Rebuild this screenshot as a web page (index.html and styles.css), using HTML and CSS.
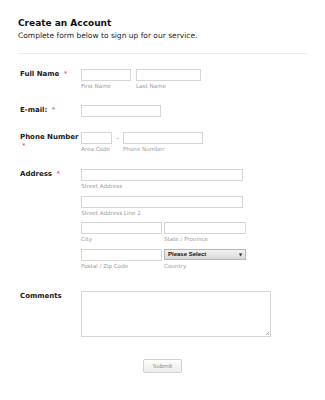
FILE: index.html
```html
<!DOCTYPE html>
<html>
<head>
<meta charset="utf-8">
<link rel="stylesheet" href="styles.css">
</head>
<body>
<div class="page">
  <div class="header">
    <h1 class="title">Create an Account</h1>
    <p class="subtitle">Complete form below to sign up for our service.</p>
  </div>
  <form class="form">
    <div class="row">
      <label class="label">Full Name <span class="req">*</span></label>
      <div class="fields">
        <div class="field"><input class="input w50" type="text"><span class="sub">First Name</span></div>
        <div class="field"><input class="input w65" type="text"><span class="sub">Last Name</span></div>
      </div>
    </div>
    <div class="row">
      <label class="label">E-mail: <span class="req">*</span></label>
      <div class="fields">
        <div class="field"><input class="input w80" type="text"></div>
      </div>
    </div>
    <div class="row row-phone">
      <label class="label">Phone Number <span class="req">*</span></label>
      <div class="fields phone">
        <div class="field"><input class="input w31" type="text"><span class="sub">Area Code</span></div>
        <span class="dash">-</span>
        <div class="field"><input class="input w80" type="text"><span class="sub">Phone Number</span></div>
      </div>
    </div>
    <div class="row row-address">
      <label class="label">Address <span class="req">*</span></label>
      <div class="address">
        <div class="field"><input class="input w162" type="text"><span class="sub">Street Address</span></div>
        <div class="field"><input class="input w162" type="text"><span class="sub">Street Address Line 2</span></div>
        <div class="pair">
          <div class="field"><input class="input w81" type="text"><span class="sub">City</span></div>
          <div class="field"><input class="input w82" type="text"><span class="sub">State / Province</span></div>
        </div>
        <div class="pair">
          <div class="field"><input class="input w81" type="text"><span class="sub">Postal / Zip Code</span></div>
          <div class="field">
            <div class="select"><span class="select-text">Please Select</span><span class="arrow">&#9660;</span></div>
            <span class="sub">Country</span>
          </div>
        </div>
      </div>
    </div>
    <div class="row row-comments">
      <label class="label">Comments</label>
      <textarea class="textarea"></textarea>
    </div>
    <div class="actions">
      <button class="submit" type="button">Submit</button>
    </div>
  </form>
</div>
</body>
</html>
```

FILE: styles.css
```css
html, body {
  margin: 0;
  padding: 0;
  background: #ffffff;
}

body {
  font-family: "DejaVu Sans", Verdana, sans-serif;
  color: #222222;
}

.page {
  padding: 18px 0 0 18px;
  width: 289px;
}

.header {
  padding-bottom: 12px;
  border-bottom: 1px solid #ececec;
}

.title {
  margin: 0;
  font-size: 9px;
  line-height: 11px;
  font-weight: bold;
  color: #111111;
}

.subtitle {
  margin: 2px 0 0 0;
  font-size: 7.5px;
  line-height: 10px;
  color: #222222;
}

.form {
  margin: 15px 0 0 0;
}

.row {
  display: flex;
  align-items: flex-start;
  padding-left: 2px;
  margin-bottom: 15px;
}

.row-phone {
  margin-bottom: 16px;
}

.row-address {
  margin-bottom: 21px;
}

.row-comments {
  margin-bottom: 22px;
}

.label {
  width: 61px;
  flex: none;
  padding-top: 1px;
  font-size: 7px;
  line-height: 8.5px;
  font-weight: bold;
  color: #1a1a1a;
}

.req {
  color: #d9534f;
  font-weight: normal;
  margin-left: 2px;
}

.fields {
  display: flex;
  gap: 5px;
}

.phone {
  gap: 0;
}

.dash {
  width: 11px;
  text-align: center;
  font-size: 6px;
  line-height: 12px;
  color: #666666;
}

.field {
  display: flex;
  flex-direction: column;
}

.input {
  box-sizing: border-box;
  height: 12px;
  margin: 0;
  padding: 0;
  border: 1px solid #d6d6d6;
  background: #ffffff;
}

.w31 { width: 31px; }
.w50 { width: 50px; }
.w65 { width: 65px; }
.w80 { width: 80px; }
.w81 { width: 81px; }
.w82 { width: 82px; }
.w162 { width: 162px; }

.sub {
  margin-top: 1px;
  font-size: 5.6px;
  line-height: 8px;
  color: #9c9c9c;
  white-space: nowrap;
}

.address {
  display: flex;
  flex-direction: column;
  gap: 5.5px;
}

.pair {
  display: flex;
  gap: 2px;
}

.select {
  box-sizing: border-box;
  width: 82px;
  height: 11.5px;
  display: flex;
  align-items: center;
  justify-content: space-between;
  padding: 0 3px 0 3px;
  border: 1px solid #b5b5b5;
  background: linear-gradient(#f2f2f2, #d9d9d9);
  margin-bottom: 0.5px;
}

.select-text {
  font-family: "Liberation Sans", Arial, sans-serif;
  font-size: 6px;
  font-weight: bold;
  color: #111111;
}

.arrow {
  font-size: 4px;
  color: #222222;
}

.textarea {
  box-sizing: border-box;
  width: 190px;
  height: 46px;
  margin: 0;
  padding: 0;
  border: 1px solid #d6d6d6;
  resize: none;
  background-color: #ffffff;
  background-image: linear-gradient(135deg, transparent 0, transparent 3px, #b0b0b0 3px, #b0b0b0 3.6px, transparent 3.6px, transparent 4.6px, #b0b0b0 4.6px, #b0b0b0 5.2px, transparent 5.2px);
  background-size: 4px 4px;
  background-position: right 1px bottom 1px;
  background-repeat: no-repeat;
}

.actions {
  display: flex;
  justify-content: center;
  width: 325px;
  margin-left: -18px;
}

.submit {
  box-sizing: border-box;
  width: 39px;
  height: 14px;
  padding: 0;
  border: 1px solid #d0d0d0;
  border-radius: 2px;
  background: linear-gradient(#fdfdfd, #ececec);
  font-family: "DejaVu Sans", Verdana, sans-serif;
  font-size: 5.5px;
  color: #888888;
}
```
